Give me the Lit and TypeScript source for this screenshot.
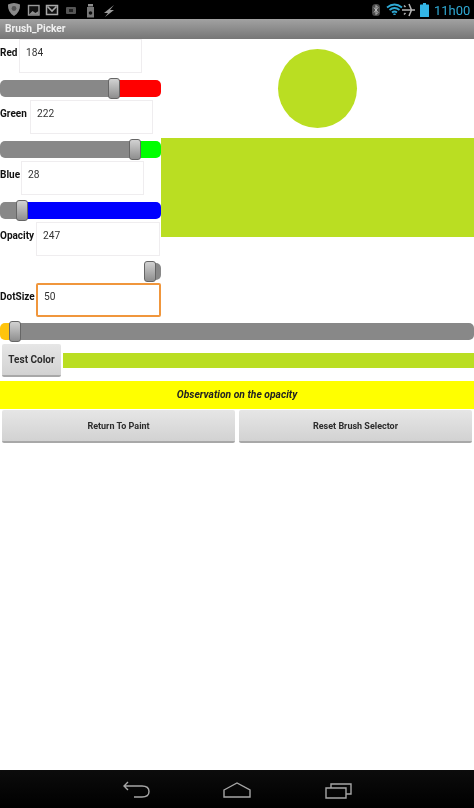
import { LitElement, html, css, svg } from "lit";
import { customElement } from "lit/decorators.js";

const LIME = css`#bade22`;
const GRAY = "#888888";

const slider = (center: number, left: string, right: string, cls = "") => html`
  <div class="slider ${cls}">
    <div class="seg l" style="flex-basis:${center}px;background:${left}"></div>
    <div class="seg r" style="background:${right}"></div>
    <div class="thumb" style="left:${center - 6}px"></div>
  </div>`;

const field = (label: string, value: string, width: number, gap: number, cls = "") => html`
  <div class="row">
    <span class="lbl">${label}</span>
    <div class="input ${cls}" style="width:${width}px;margin-right:${gap}px">${value}</div>
  </div>`;

const leftIcons = svg`
  <g transform="translate(8,3)">
    <path d="M0 1.5 Q3 0 6 0 Q9 0 12 1.5 Q12.5 9 6 13 Q-0.5 9 0 1.5Z" fill="#8a8a8a"/>
    <circle cx="6" cy="5.5" r="2.4" fill="#555"/>
  </g>
  <g transform="translate(28.5,5.5)">
    <rect width="10.5" height="9.5" fill="#111" stroke="#9a9a9a" stroke-width="1.4"/>
    <path d="M0.5 9 L4 5.5 L7 7.5 L10 5.5 V9Z" fill="#8e8e8e"/>
  </g>
  <g transform="translate(46.5,5.5)">
    <rect width="11" height="9" fill="#111" stroke="#a8a8a8" stroke-width="1.5"/>
    <path d="M1 1 L5.5 5.5 L10 1" fill="none" stroke="#a8a8a8" stroke-width="1.6"/>
  </g>
  <g transform="translate(66,7)">
    <rect width="10" height="7" rx="1" fill="#555"/>
    <rect x="3" y="2" width="4" height="3" fill="#222"/>
  </g>
  <g transform="translate(87,4)">
    <rect x="1" y="0" width="5" height="2.5" fill="#8e8e8e"/>
    <rect y="3" width="7" height="10.5" fill="#777"/>
    <circle cx="3.5" cy="9" r="1.8" fill="#111"/>
  </g>
  <path transform="translate(104,5)" d="M10 0 L0 8 L4 8 L1 12 L10 5 L6 5Z" fill="#9a9a9a"/>`;

const rightIcons = svg`
  <g transform="translate(372,4)">
    <rect width="8" height="12" rx="3.5" fill="#4a4a4a"/>
    <path d="M2 3.5 L6 8.5 L4 10.5 V1.5 L6 3.5 L2 8.5" fill="none" stroke="#bbb" stroke-width="1"/>
  </g>
  <g fill="none" stroke="#2fa9d4" stroke-width="1.8">
    <path d="M387 7.5 Q394.5 1.5 402 7.5"/>
    <path d="M389.5 10 Q394.5 6 399.5 10"/>
    <path d="M392 12.5 Q394.5 10.5 397 12.5"/>
  </g>
  <path d="M393.5 14 H395.5 L394.5 15Z" fill="#2fa9d4" stroke="#2fa9d4"/>
  <path d="M402 10 H415 M409 4 L411.5 10 L409 16 M405.5 7 L404 5.5 M405.5 13 L404 14.5" fill="none" stroke="#b4b4b4" stroke-width="1.5"/>
  <g transform="translate(420,3)" fill="#33b5e5">
    <rect x="3" y="0" width="3" height="2"/>
    <rect y="1.5" width="9" height="12.5" rx="0.5"/>
  </g>
  <text x="434" y="15" class="clock">11h00</text>`;

@customElement("app-root")
export class AppRoot extends LitElement {
  static styles = css`
    :host {
      display: flex;
      flex-direction: column;
      width: 474px;
      height: 808px;
      background: #fff;
      font-family: Roboto, "Liberation Sans", sans-serif;
      color: #222;
      overflow: hidden;
      filter: blur(0.35px);
    }
    .status { display: block; width: 474px; height: 19px; flex: none; background: #000; }
    .clock { font: 400 13px Roboto, sans-serif; fill: #2fa9d4; }
    .title {
      height: 20px; flex: none; box-sizing: border-box; padding-left: 5px;
      background: linear-gradient(#a2a2a2, #767676);
      color: #f0f0f0; font-size: 10.2px; font-weight: 700; line-height: 20px;
    }
    .content { flex: 1; display: flex; flex-direction: column; }
    .top { display: flex; height: 278px; flex: none; }
    .left { width: 161px; flex: none; display: flex; flex-direction: column; }
    .right { flex: 1; display: flex; flex-direction: column; align-items: center; }
    .circle { width: 79px; height: 79px; border-radius: 50%; margin-top: 10px; background: ${LIME}; }
    .block { align-self: stretch; height: 99px; margin-top: 10px; background: ${LIME}; }
    .row { display: flex; height: 34px; align-items: center; flex: none; }
    .lbl { font-size: 10px; font-weight: 700; color: #111; padding-bottom: 8px; }
    .input {
      box-sizing: border-box; height: 34px; margin-left: auto; flex: none;
      border: 1px solid #efedef; background: #fff; padding: 0 0 8px 6px;
      font-size: 10.2px; line-height: 25px; color: #333;
    }
    .focused { border: 2px solid #f0963c; border-radius: 2px; padding-left: 6px; line-height: 23px; }
    .slider { position: relative; display: flex; height: 17px; border-radius: 5px; flex: none; }
    .seg { height: 100%; }
    .seg.l { flex: none; border-radius: 5px 0 0 5px; }
    .seg.r { flex: 1; border-radius: 0 5px 5px 0; }
    .thumb {
      position: absolute; top: -2px; width: 12px; height: 21px; box-sizing: border-box;
      border: 1px solid #666; border-radius: 3px;
      background: linear-gradient(#d2d2d2, #8e8e8e);
    }
    .s1 { margin: 7px 0 3px; }
    .s4 { margin-top: 6px; }
    .test { display: flex; align-items: center; height: 33px; margin-top: 4px; flex: none; }
    .btn {
      box-sizing: border-box; display: flex; align-items: center; justify-content: center;
      height: 33px; background: linear-gradient(#e6e6e6, #d2d2d2);
      border-bottom: 2px solid #a8a8a8; border-radius: 2px;
      font-size: 9px; font-weight: 700; color: #2c2c2c;
    }
    .tbtn { width: 59px; margin-left: 2px; font-size: 10px; flex: none; }
    .bar { flex: 1; height: 15px; margin-left: 2px; background: ${LIME}; }
    .note {
      height: 28px; margin-top: 4px; flex: none; background: #ff0; text-align: center;
      font-size: 10.3px; font-weight: 700; font-style: italic; line-height: 27px; color: #222;
    }
    .btns { display: flex; gap: 4px; padding: 1px 2px 0; }
    .btns .btn { flex: 1; }
    .spacer { flex: 1; }
    .nav { display: block; width: 474px; height: 38px; flex: none; background: linear-gradient(#0c0c0c, #000); }
  `;

  render() {
    return html`
      <svg class="status" viewBox="0 0 474 19">${leftIcons}${rightIcons}</svg>
      <div class="title">Brush_Picker</div>
      <div class="content">
        <div class="top">
          <div class="left">
            ${field("Red", "184", 123, 19)}
            ${slider(114, GRAY, "#ff0000", "s1")}
            ${field("Green", "222", 123, 8)}
            ${slider(135, GRAY, "#00ff00", "s1")}
            ${field("Blue", "28", 123, 17)}
            ${slider(22, GRAY, "#0000ff", "s1")}
            ${field("Opacity", "247", 124, 1)}
            ${slider(150, "transparent", GRAY, "s1")}
            ${field("DotSize", "50", 125, 0, "focused")}
          </div>
          <div class="right">
            <div class="circle"></div>
            <div class="block"></div>
          </div>
        </div>
        ${slider(15, "#ffc40d", GRAY, "s4")}
        <div class="test">
          <div class="btn tbtn">Test Color</div>
          <div class="bar"></div>
        </div>
        <div class="note">Observation on the opacity</div>
        <div class="btns">
          <div class="btn">Return To Paint</div>
          <div class="btn">Reset Brush Selector</div>
        </div>
        <div class="spacer"></div>
      </div>
      <svg class="nav" viewBox="0 0 474 38">
        <g fill="none" stroke="#a6a6a6" stroke-width="1.4">
          <path d="M128 12 L124 16 L128 20 M124 16 H142 Q149 16 149 21.5 Q149 27 142 27 H134"/>
          <path d="M224 20 L237 13 L250 20 V27 H224Z"/>
          <path d="M326 18 H346 V28 H326Z M331 18 V14 H351 V24 H346" />
        </g>
      </svg>
    `;
  }
}
